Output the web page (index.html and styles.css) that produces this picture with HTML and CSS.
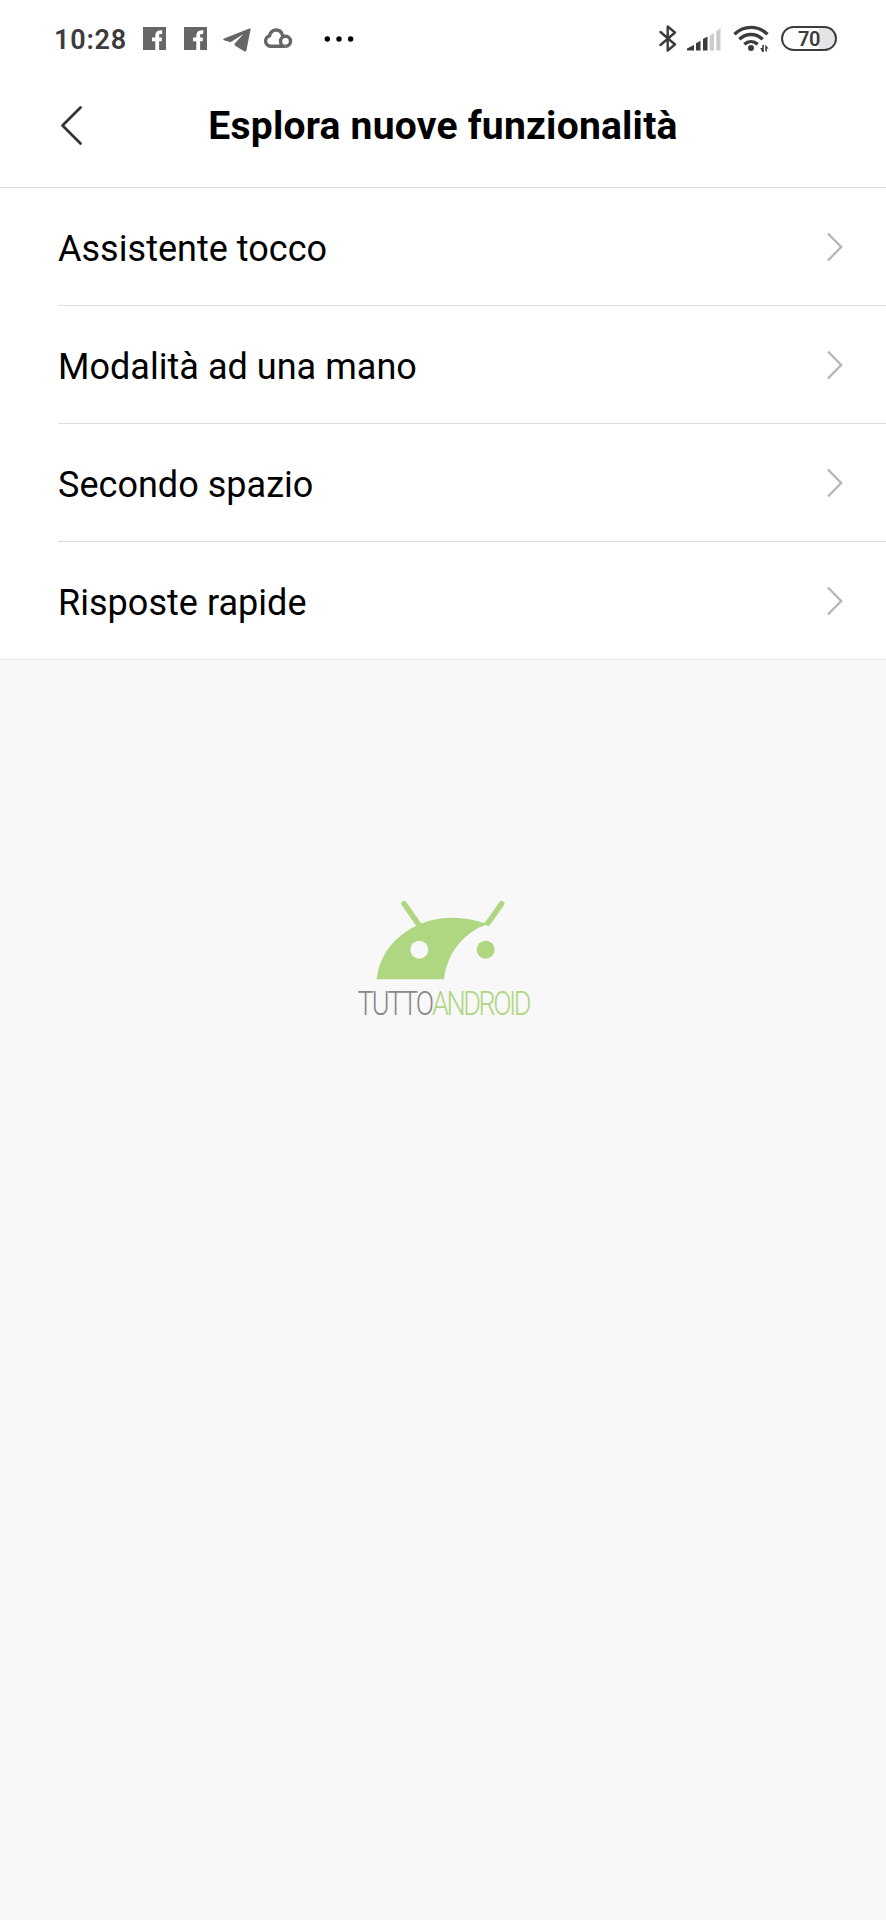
FILE: index.html
```html
<!DOCTYPE html>
<html lang="it">

<head>
  <meta charset="UTF-8">
  <meta name="viewport" content="width=device-width, initial-scale=1.0">
  <title>Esplora nuove funzionalità</title>
  <link rel="stylesheet" href="styles.css">
</head>

<body>
  <div class="status-bar">
    <div class="status-left">
      <span class="time">10:28</span>
      <svg class="facebook" width="23" height="23" viewBox="0 0 23 23">
        <path d="M0 0h23v23H0z" fill="#666" />
        <path d="M14.200 23V8.300c0-2.300 1-3.300 5-3.200M9 12.300h9.800" fill="none" stroke="#fff" stroke-width="3.800" />
      </svg>
      <svg class="facebook" width="23" height="23" viewBox="0 0 23 23">
        <path d="M0 0h23v23H0z" fill="#666" />
        <path d="M14.200 23V8.300c0-2.300 1-3.300 5-3.200M9 12.300h9.800" fill="none" stroke="#fff" stroke-width="3.800" />
      </svg>
      <svg class="telegram" width="28" height="24" viewBox="0 0 28 24">
        <path d="M27 .3 1 10.500c-1 .5-1 1.400 0 1.800l6.500 2L20.500 6 11.500 15.800l.3 1.700L21.500 23.400c1 .4 1.600 0 1.900-1L27.600 1.300C27.700.5 27.500.2 27 .3z" fill="#666" />
      </svg>
      <svg class="cloud" width="30" height="22" viewBox="0 0 30 22">
        <g fill="none" stroke="#666" stroke-width="3.400">
          <path d="M22.500 18.300H7.500a5.300 5.300 0 0 1-1-10.400C7.200 4.300 9.900 2 13 2c3.400 0 6 2.200 6.700 6" />
          <path d="M22.500 18.300a5 5 0 1 0-5-5c0 2 .7 3.600 2 4.700" />
        </g>
      </svg>
      <svg class="dots" width="30" height="6" viewBox="0 0 30 6">
        <circle cx="3.300" cy="3" r="2.700" />
        <circle cx="15" cy="3" r="2.700" />
        <circle cx="26.600" cy="3" r="2.700" />
      </svg>
    </div>

    <div class="status-right">
      <svg class="bluetooth" width="18" height="29" viewBox="0 0 18 29">
        <path d="M1.500 8 16 20.500 8.700 26.500V2.500L16 8.500 1.500 21" fill="none" stroke="#3c3c3c" stroke-width="2.400" stroke-linejoin="round" stroke-linecap="round" />
      </svg>
      <svg class="signal" width="34" height="24" viewBox="0 0 34 24">
        <path d="M0 23.500v-2l7-3.500v5.500zM9 23.500v-7.300l4.500-2.500v9.800zM16 23.500V12l4.500-2.500v14z" fill="#3c3c3c" />
        <path d="M22.700 23.500V8.500L27 6v17.500zM29.300 23.500V4l4.200-3v22.500z" fill="#ccc" />
      </svg>
      <svg class="wifi" width="36" height="28" viewBox="0 0 36 28">
        <g fill="none" stroke="#3c3c3c" stroke-width="3.400">
          <path d="M1.500 9.300C11 .1 25 .1 34.500 9.300" />
          <path d="M6.300 14.300c6.900-6.500 16.500-6.500 23.400 0" />
          <path d="M11.300 19.300c4-3.600 9.400-3.600 13.400 0" />
        </g>
        <circle cx="18" cy="23" r="3" fill="#3c3c3c" />
        <path d="M27.200 23h2v-3h1.600v7h-1.600zM32.300 19.500v7h1.600v-3h1.600z" fill="#3c3c3c" />
      </svg>
      <div class="battery"><span>70</span></div>
    </div>
  </div>

  <header class="header">
    <svg class="back" width="24" height="42" viewBox="0 0 24 42">
      <path d="M20.500 2.500 2.500 20.500l18 18" fill="none" stroke="#333" stroke-width="2.800" stroke-linecap="round" stroke-linejoin="round" />
    </svg>
    <h1>Esplora nuove funzionalità</h1>
  </header>

  <ul class="list">
    <li class="item">
      <span>Assistente tocco</span>
      <svg class="arrow" width="16" height="30" viewBox="0 0 16 30"><path d="M1 1.500 14.200 15 1 28.500" /></svg>
    </li>
    <li class="item">
      <span>Modalità ad una mano</span>
      <svg class="arrow" width="16" height="30" viewBox="0 0 16 30"><path d="M1 1.500 14.200 15 1 28.500" /></svg>
    </li>
    <li class="item">
      <span>Secondo spazio</span>
      <svg class="arrow" width="16" height="30" viewBox="0 0 16 30"><path d="M1 1.500 14.200 15 1 28.500" /></svg>
    </li>
    <li class="item">
      <span>Risposte rapide</span>
      <svg class="arrow" width="16" height="30" viewBox="0 0 16 30"><path d="M1 1.500 14.200 15 1 28.500" /></svg>
    </li>
  </ul>

  <div class="logo">
    <svg width="180" height="130" viewBox="0 0 180 130">
      <!-- robot head -->
      <path d="M23.700 79.300C27 45 59 17.700 99 17.700c12 0 23 2 34.500 6.300C109 34 94 54 91 79.300z" fill="#afd681" />
      <circle cx="66.300" cy="49.700" r="9" fill="#f8f8f8" />
      <circle cx="132.700" cy="49.700" r="9" fill="#afd681" />
      <path d="M51 3.700 66 25M148.700 3.700 135 23" stroke="#afd681" stroke-width="5.500" stroke-linecap="round" />
      <path d="M128 24.500 137 19l1.500 3.500-11 4.500z" fill="#afd681" />
      <text transform="translate(4.500 115) scale(.82 1)"><tspan class="tutto">TUTTO</tspan><tspan class="android">ANDROID</tspan></text>
    </svg>
  </div>
</body>

</html>
```
FILE: styles.css
```css
* {
  box-sizing: border-box;
}

body {
  margin: 0;
  height: 1920px;
  background-color: #f8f8f8;
  font-family: Roboto, sans-serif;
  color: #000;
  overflow: hidden;
}

.status-bar {
  display: flex;
  justify-content: space-between;
  height: 78px;
  padding: 0 49px 0 54px;
  background-color: #fff;
}

.status-left,
.status-right {
  display: flex;
  align-items: center;
  height: 77px;
}

.time {
  width: 89px;
  padding-top: 2px;
  font-size: 27px;
  font-weight: 600;
  letter-spacing: 0.8px;
  color: #3c3c3c;
}

.facebook {
  margin-right: 18px;
}

.telegram {
  margin: 2px 0 0 -2px;
}

.cloud {
  margin-left: 12px;
}

.dots {
  margin-left: 31px;
}

.signal {
  margin-left: 10px;
}

.wifi {
  margin-left: 12px;
}

.battery {
  width: 56px;
  height: 25px;
  margin-left: 12px;
  border: 2.500px solid #3c3c3c;
  border-radius: 13px;
  background: linear-gradient(to right, #fff 70%, #e4e4e4 70%);
  font-size: 20px;
  font-weight: 600;
  line-height: 22px;
  letter-spacing: -0.5px;
  text-align: center;
  color: #3c3c3c;
}

.header {
  display: flex;
  align-items: center;
  height: 110px;
  padding: 0 60px 14px;
  background-color: #fff;
  border-bottom: 1px solid #d9d9d9;
}

h1 {
  flex: 1;
  margin: 0 24px 0 0;
  font-size: 39px;
  font-weight: 700;
  letter-spacing: 0.23px;
  text-align: center;
}

.list {
  margin: 0;
  padding: 0 0 0 58px;
  list-style: none;
  background-color: #fff;
  border-bottom: 1px solid #e6e6e6;
}

.item {
  display: flex;
  justify-content: space-between;
  align-items: center;
  height: 118px;
  padding: 5px 43px 0 0;
  border-bottom: 1px solid #dedede;
  font-size: 36px;
  letter-spacing: 0.03px;
}

.item:last-child {
  height: 117px;
  border-bottom: none;
}

.arrow {
  margin-top: -4px;
  fill: none;
  stroke: #b5b5b5;
  stroke-width: 2.300;
}

.logo {
  display: flex;
  justify-content: center;
  padding-top: 240px;
}

.logo text {
  font-size: 33px;
  font-weight: 300;
  letter-spacing: -2.400px;
}

.tutto {
  fill: #88888c;
}

.logo .android {
  letter-spacing: -3px;
  fill: #afd681;
}
```
